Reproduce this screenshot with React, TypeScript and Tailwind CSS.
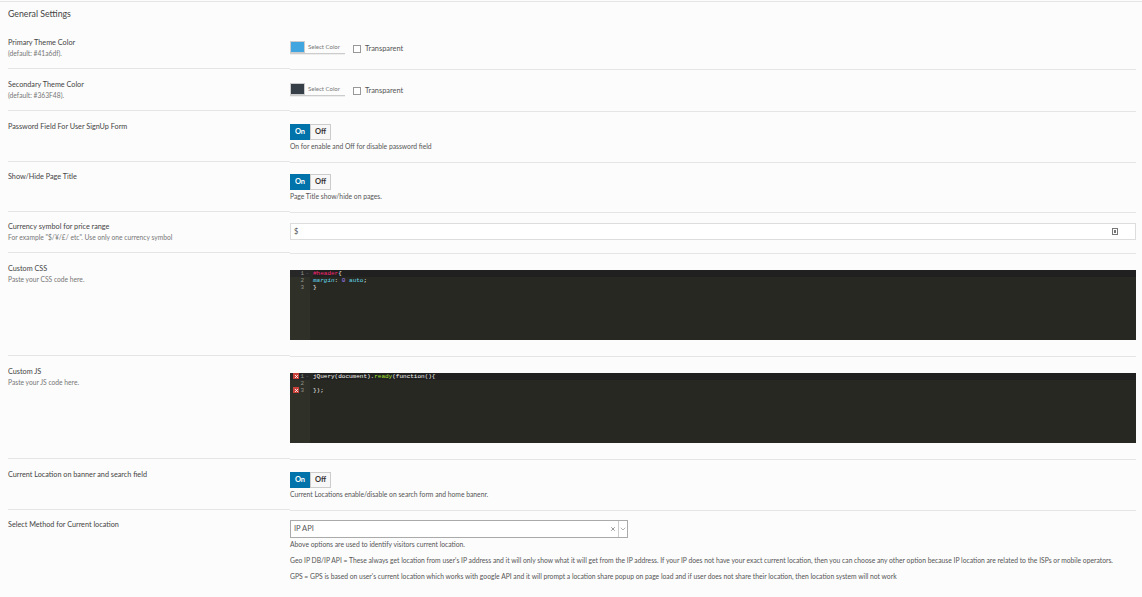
import { ReactNode } from 'react'
import { ChevronDown, X } from 'lucide-react'

function Row({ label, sub, height, topPad, tight, last, children }: { label: string; sub?: string; height: string; topPad: string; tight?: boolean; last?: boolean; children: ReactNode }) {
  return (
    <div className={`flex ${height}`}>
      <div className={`w-[282px] shrink-0 ${tight ? 'pt-[9px]' : 'pt-[10px]'} ${last ? '' : 'border-b border-[#e5e5e5]'}`}>
        <p className="text-[7.25px] leading-[11px] text-[#444]">{label}</p>
        {sub && <p className="text-[6.7px] leading-[11px] text-[#777]">{sub}</p>}
      </div>
      <div className={`flex-1 min-w-0 ${topPad} ${last ? '' : 'border-b border-[#e5e5e5] translate-y-px'}`}>{children}</div>
    </div>
  )
}

function ColorPick({ color }: { color: string }) {
  return (
    <div className="flex items-center">
      <div className="flex h-[13px] w-[55px] border-b border-[#ccc] shadow-[0_1px_0_#eee]">
        <div className="w-[15px] border border-[#ccc]" style={{ backgroundColor: color }} />
        <span className="pl-[3px] text-[6px] leading-[11px] text-[#777]">Select Color</span>
      </div>
      <div className="ml-[8px] mt-[2px] h-[8px] w-[8px] border border-[#999] bg-white" />
      <span className="ml-[4px] mt-[2px] text-[7.4px] text-[#555]">Transparent</span>
    </div>
  )
}

function Toggle() {
  return (
    <div className="flex h-[16px] w-[41px] text-[7.5px] font-bold leading-[14px]">
      <div className="flex w-[20px] items-center justify-center bg-[#0073aa] text-white">On</div>
      <div className="flex w-[21px] items-center justify-center border border-[#ccc] bg-[#f7f7f7] text-[#333]">Off</div>
    </div>
  )
}

function Help({ children, className = '' }: { children: ReactNode; className?: string }) {
  return <p className={`text-[6.75px] leading-[11px] text-[#555] ${className}`}>{children}</p>
}

function Editor({ lines, errors }: { lines: ReactNode[]; errors?: boolean }) {
  return (
    <div className="flex h-[70px] bg-[#272822] font-['Liberation_Mono',monospace] text-[6px] leading-[7px]">
      <div className="w-[20px] shrink-0 bg-[#2f3129] text-right text-[#8f908a]">
        {lines.map((_, i) => (
          <div key={i} className={`relative h-[7px] pr-[6px] ${i === 0 ? 'bg-[#272727]' : ''}`}>
            {errors && i !== 1 && (
              <span className="absolute left-[3px] top-0 flex h-[6px] w-[6px] items-center justify-center bg-[#c9403a] text-white">
                <X size={5} strokeWidth={4} />
              </span>
            )}
            {i + 1}
            {i === 0 && <span className="absolute right-[1px] top-0 text-[#666]">-</span>}
          </div>
        ))}
      </div>
      <div className="flex-1 pl-[3px] text-[#f8f8f2]">
        {lines.map((l, i) => (
          <div key={i} className={`h-[7px] ${i === 0 ? 'bg-[#202020]' : ''}`}>{l}</div>
        ))}
      </div>
    </div>
  )
}

export default function App() {
  return (
    <div className="h-[597px] w-[1142px] overflow-hidden bg-[#fcfcfc] pl-[8px] pr-[6px] font-['Lato',sans-serif]">
      <div className="-ml-[8px] -mr-[6px] mt-px h-px bg-[#e5e5e5]" />
      <h2 className="h-[25px] pt-[5px] text-[8.75px] leading-[13px] text-[#444]">General Settings</h2>

      <Row label="Primary Theme Color" sub="(default: #41a6df)." height="h-[42px]" topPad="pt-[13px]">
        <ColorPick color="#41a6df" />
      </Row>
      <Row label="Secondary Theme Color" sub="(default: #363F48)." height="h-[42px]" topPad="pt-[13px]">
        <ColorPick color="#363f48" />
      </Row>
      <Row label="Password Field For User SignUp Form" height="h-[51px]" topPad="pt-[12px]">
        <Toggle />
        <Help className="mt-[1px]">On for enable and Off for disable password field</Help>
      </Row>
      <Row label="Show/Hide Page Title" tight height="h-[50px]" topPad="pt-[11px]">
        <Toggle />
        <Help className="mt-[1px]">Page Title show/hide on pages.</Help>
      </Row>
      <Row label="Currency symbol for price range" tight sub={'For example "$/¥/£/ etc". Use only one currency symbol'} height="h-[41px]" topPad="pt-[10px]">
        <div className="flex h-[17px] items-center justify-between border border-[#ddd] bg-white pl-[3px] pr-[17px] text-[7.5px] text-[#555]">
          <span>$</span>
          <span className="flex h-[7px] w-[6px] items-center justify-center border border-[#777]">
            <span className="h-[3px] w-[2px] bg-[#777]" />
          </span>
        </div>
      </Row>
      <Row label="Custom CSS" sub="Paste your CSS code here." height="h-[103px]" topPad="pt-[16px]">
        <Editor
          lines={[
            <><span className="text-[#f92672]">#header</span>{'{'}</>,
            <><span className="italic text-[#66d9ef]">margin</span>: <span className="text-[#ae81ff]">0</span> <span className="text-[#66d9ef]">auto</span>;</>,
            '}',
          ]}
        />
      </Row>
      <Row label="Custom JS" sub="Paste your JS code here." height="h-[103px]" topPad="pt-[16px]">
        <Editor
          errors
          lines={[
            <>jQuery(document).<span className="text-[#a6e22e]">ready</span>(function(){'{'}</>,
            '',
            <>{'}'});</>,
          ]}
        />
      </Row>
      <Row label="Current Location on banner and search field" height="h-[51px]" topPad="pt-[12px]">
        <Toggle />
        <Help className="mt-[1px]">Current Locations enable/disable on search form and home banenr.</Help>
      </Row>
      <Row label="Select Method for Current location" tight height="h-[87px]" topPad="pt-[10px]" last>
        <div className="flex h-[18px] w-[338px] border border-[#aaa] bg-white text-[#555]">
          <span className="flex-1 pl-[3px] text-[7.5px] leading-[16px]">IP API</span>
          <span className="flex w-[11px] items-center justify-center text-[#777]"><X size={6} strokeWidth={3} /></span>
          <span className="flex w-[9px] items-center justify-center border-l border-[#ccc] text-[#888]"><ChevronDown size={8} /></span>
        </div>
        <Help className="mt-[1px]">Above options are used to identify visitors current location.</Help>
        <Help className="mt-[5px]">Geo IP DB/IP API = These always get location from user's IP address and it will only show what it will get from the IP address. If your IP does not have your exact current location, then you can choose any other option because IP location are related to the ISPs or mobile operators.</Help>
        <Help className="mt-[5px]">GPS = GPS is based on user's current location which works with google API and it will prompt a location share popup on page load and if user does not share their location, then location system will not work</Help>
      </Row>
    </div>
  )
}
